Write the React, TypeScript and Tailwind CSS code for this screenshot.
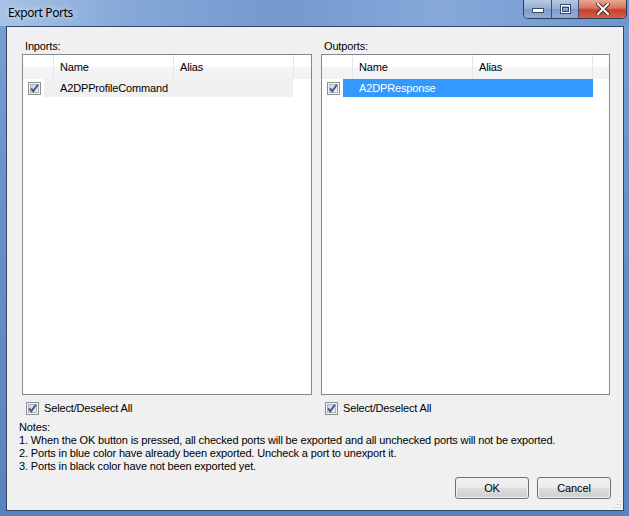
import React from 'react';

type Port = { name: string; exported: boolean };

function CheckBox() {
  return (
    <svg width="13" height="13" viewBox="0 0 13 13" className="shrink-0">
      <defs>
        <linearGradient id="cbFill" x1="0" y1="0" x2="1" y2="1">
          <stop offset="0" stopColor="#cbcfd5" />
          <stop offset="1" stopColor="#f6f6f6" />
        </linearGradient>
      </defs>
      <rect x="0.5" y="0.5" width="12" height="12" fill="#f4f4f4" stroke="#8e8f8f" />
      <rect x="2.5" y="2.5" width="8" height="8" fill="url(#cbFill)" stroke="#b1b5ba" />
      <path d="M3.2 6.4 L5.3 9.3 L9.9 2.8" fill="none" stroke="#3c5597" strokeWidth="1.9" />
    </svg>
  );
}

function PortList({ label, port }: { label: string; port: Port }) {
  return (
    <div className="flex flex-col">
      {/* group label */}
      <div className="h-[27px] pt-[13px] pl-[3px] leading-[13px]">{label}</div>

      {/* list view */}
      <div className="h-[341px] border border-[#828790] bg-white flex flex-col">
        <div className="h-[24px] flex shrink-0 bg-[linear-gradient(#ffffff_0%,#ffffff_45%,#f3f4f6_55%,#f1f2f4_100%)]">
          <div className="w-[31px] border-r border-[#e3e5e8]" />
          <div className="w-[120px] border-r border-[#e3e5e8] pl-[6px] flex items-center">Name</div>
          <div className="w-[120px] border-r border-[#e3e5e8] pl-[6px] flex items-center">Alias</div>
          <div className="flex-1" />
        </div>

        <div className="h-[18px] flex items-center">
          <div className="pl-[5px] pr-[3px] flex items-center">
            <CheckBox />
          </div>
          <div
            className={
              port.exported
                ? 'w-[250px] h-full flex items-center pl-[16px] bg-[#3399ff] text-white'
                : 'w-[249px] h-full flex items-center pl-[16px] bg-[#f0f0f0] text-black'
            }
          >
            {port.name}
          </div>
        </div>
      </div>

      {/* select all */}
      <div className="mt-[7px] h-[13px] pl-[4px] flex items-center gap-[5px] leading-[13px]">
        <CheckBox />
        <span>Select/Deselect All</span>
      </div>
    </div>
  );
}

function WinButton({ children }: { children: React.ReactNode }) {
  return (
    <div className="w-[74px] h-[22px] rounded-[3px] border border-[#707070] p-px">
      <div className="h-full rounded-[2px] flex items-center justify-center bg-[linear-gradient(#f2f2f2_0%,#ebebeb_48%,#dddddd_52%,#cfcfcf_100%)]">
        {children}
      </div>
    </div>
  );
}

function CaptionButtons() {
  return (
    <div className="flex h-[19px] rounded-b-[5px] border border-t-0 border-[#2a3a58] shadow-[inset_0_0_0_1px_rgba(255,255,255,0.35)] overflow-hidden">
      <div className="w-[28px] flex items-center justify-center border-r border-[#3d506f] bg-[linear-gradient(#b7c9e2,#93aed3_50%,#7c9ccb_51%,#8faed8)]">
        <svg width="12" height="6" viewBox="0 0 12 6" className="mt-[4px]">
          <rect x="0.5" y="0.5" width="11" height="4" fill="#ffffff" stroke="#3a4b68" />
        </svg>
      </div>
      <div className="w-[27px] flex items-center justify-center border-r border-[#3d506f] bg-[linear-gradient(#b7c9e2,#93aed3_50%,#7c9ccb_51%,#8faed8)]">
        <svg width="11" height="10" viewBox="0 0 11 10">
          <rect x="0.5" y="0.5" width="10" height="9" fill="none" stroke="#3a4b68" />
          <rect x="1.5" y="1.5" width="8" height="7" fill="none" stroke="#ffffff" />
          <rect x="2.5" y="3.5" width="6" height="4" fill="none" stroke="#3a4b68" />
        </svg>
      </div>
      <div className="w-[47px] flex items-center justify-center bg-[linear-gradient(#e9a795,#d8735d_45%,#c8402b_55%,#d4604a)]">
        <svg width="14" height="12" viewBox="0 0 14 12">
          <path d="M2 1 L12 11 M12 1 L2 11" stroke="#4a2a22" strokeWidth="4" strokeLinecap="square" />
          <path d="M2 1 L12 11 M12 1 L2 11" stroke="#ffffff" strokeWidth="2" strokeLinecap="square" />
        </svg>
      </div>
    </div>
  );
}

export default function App() {
  const inport: Port = { name: 'A2DPProfileCommand', exported: false };
  const outport: Port = { name: 'A2DPResponse', exported: true };

  return (
    <div className="w-[629px] h-[516px] flex flex-col overflow-hidden text-[11px] tracking-[-0.15px] text-black font-['Liberation_Sans',Arial,sans-serif] bg-[linear-gradient(180deg,#7a9fd2_0%,#6990c8_40%,#5a83bd_100%)]">
      {/* title bar */}
      <div className="h-[26px] shrink-0 flex justify-between pl-[8px] pr-[2px] bg-[linear-gradient(90deg,#a7c3e6_0%,#85a8d8_20%,#7399cf_45%,#86a9da_70%,#6f96cd_100%)]">
        <div className="pt-[5px] text-[12px] leading-[16px] tracking-[-0.4px] font-['Noto_Sans',sans-serif] text-black [text-shadow:0_0_6px_rgba(255,255,255,0.9)]">
          Export Ports
        </div>
        <CaptionButtons />
      </div>

      {/* client area */}
      <div className="flex-1 flex pl-[6px] pr-[5px] pb-[5px]">
        <div className="relative flex-1 flex flex-col border border-[#34476a] bg-[#f0f0f0]">
          <div className="flex gap-[9px] pl-[15px] pr-[13px]">
            <div className="w-[290px]">
              <PortList label="Inports:" port={inport} />
            </div>
            <div className="w-[289px]">
              <PortList label="Outports:" port={outport} />
            </div>
          </div>

          {/* notes */}
          <div className="mt-[6px] pl-[12px] leading-[13px]">
            <div>Notes:</div>
            <div>1. When the OK button is pressed, all checked ports will be exported and all unchecked ports will not be exported.</div>
            <div>2. Ports in blue color have already been exported. Uncheck a port to unexport it.</div>
            <div>3. Ports in black color have not been exported yet.</div>
          </div>

          {/* buttons */}
          <div className="mt-[4px] flex justify-end gap-[8px] pr-[12px]">
            <WinButton>OK</WinButton>
            <WinButton>Cancel</WinButton>
          </div>

          {/* size grip */}
          <svg width="8" height="8" viewBox="0 0 8 8" className="absolute right-[1px] bottom-[1px]">
            <g fill="#b5b5b5">
              <rect x="6" y="0" width="1" height="1" />
              <rect x="3" y="3" width="1" height="1" />
              <rect x="6" y="3" width="1" height="1" />
              <rect x="0" y="6" width="1" height="1" />
              <rect x="3" y="6" width="1" height="1" />
              <rect x="6" y="6" width="1" height="1" />
            </g>
          </svg>
        </div>
      </div>
    </div>
  );
}
